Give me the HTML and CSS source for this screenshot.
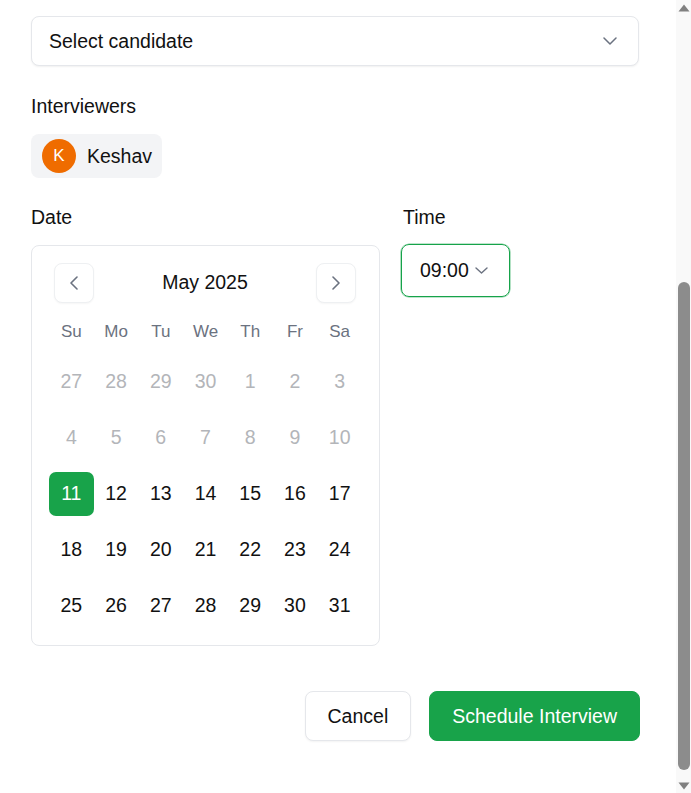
FILE: index.html
```html
<!DOCTYPE html>
<html lang="en">
<head>
<meta charset="utf-8">
<title>Schedule Interview</title>
<link rel="stylesheet" href="styles.css">
</head>
<body>
<div class="app">
  <div class="page">
    <div class="select"><span>Select candidate</span>
      <svg class="chev" width="14" height="8" viewBox="0 0 14 8"><path d="M1 1l6 6 6-6" fill="none" stroke="#6b7280" stroke-width="1.5" stroke-linecap="round" stroke-linejoin="round"/></svg>
    </div>

    <div class="field">
      <div class="label">Interviewers</div>
      <div class="chips">
        <div class="chip"><span class="avatar">K</span><span>Keshav</span></div>
      </div>
    </div>

    <div class="datetime">
      <div class="date-col">
        <div class="label">Date</div>
        <div class="calendar">
          <div class="cal-head">
            <button class="nav" type="button" aria-label="Previous month">
              <svg width="8" height="14" viewBox="0 0 8 14"><path d="M7 1L1 7l6 6" fill="none" stroke="#6b7280" stroke-width="1.6" stroke-linecap="round" stroke-linejoin="round"/></svg>
            </button>
            <div class="month">May 2025</div>
            <button class="nav" type="button" aria-label="Next month">
              <svg width="8" height="14" viewBox="0 0 8 14"><path d="M1 1l6 6-6 6" fill="none" stroke="#6b7280" stroke-width="1.6" stroke-linecap="round" stroke-linejoin="round"/></svg>
            </button>
          </div>
          <div class="weekdays">
            <span>Su</span><span>Mo</span><span>Tu</span><span>We</span><span>Th</span><span>Fr</span><span>Sa</span>
          </div>
          <div class="days">
            <span class="day muted">27</span><span class="day muted">28</span><span class="day muted">29</span><span class="day muted">30</span><span class="day muted">1</span><span class="day muted">2</span><span class="day muted">3</span>
            <span class="day muted">4</span><span class="day muted">5</span><span class="day muted">6</span><span class="day muted">7</span><span class="day muted">8</span><span class="day muted">9</span><span class="day muted">10</span>
            <span class="day selected">11</span><span class="day">12</span><span class="day">13</span><span class="day">14</span><span class="day">15</span><span class="day">16</span><span class="day">17</span>
            <span class="day">18</span><span class="day">19</span><span class="day">20</span><span class="day">21</span><span class="day">22</span><span class="day">23</span><span class="day">24</span>
            <span class="day">25</span><span class="day">26</span><span class="day">27</span><span class="day">28</span><span class="day">29</span><span class="day">30</span><span class="day">31</span>
          </div>
        </div>
      </div>
      <div class="time-col">
        <div class="label">Time</div>
        <div class="time-select"><span>09:00</span>
          <svg width="13" height="7" viewBox="0 0 13 7"><path d="M1 1l5.5 5 5.5-5" fill="none" stroke="#6b7280" stroke-width="1.4" stroke-linecap="round" stroke-linejoin="round"/></svg>
        </div>
      </div>
    </div>

    <div class="actions">
      <button class="btn btn-cancel" type="button">Cancel</button>
      <button class="btn btn-primary" type="button">Schedule Interview</button>
    </div>
  </div>

  <div class="scrollbar" aria-hidden="true">
    <div class="sb-btn"><svg width="12" height="8" viewBox="0 0 12 8"><path d="M6 0.5L11.5 7.5H0.5Z" fill="#808080"/></svg></div>
    <div class="sb-track"><div class="sb-thumb"></div></div>
    <div class="sb-btn"><svg width="12" height="8" viewBox="0 0 12 8"><path d="M0.5 0.5H11.5L6 7.5Z" fill="#808080"/></svg></div>
  </div>
</div>
</body>
</html>
```
FILE: styles.css
```css
* { box-sizing: border-box; }
html, body { margin: 0; padding: 0; background: #fff; }
body {
  font-family: "Liberation Sans", Arial, sans-serif;
  font-size: 19.5px;
  color: #111;
}
.app {
  display: flex;
  height: 793px;
  overflow: hidden;
}
.page {
  width: 676px;
  padding: 16px 36px 0 31px;
  display: flex;
  flex-direction: column;
}
.field { display: flex; flex-direction: column; margin-top: 28px; }
.label { line-height: 24px; height: 24px; margin-bottom: 16px; }
.select {
  height: 50px;
  width: 608px;
  border: 1px solid #e5e7eb;
  border-radius: 8px;
  box-shadow: 0 1px 2px rgba(0,0,0,0.06);
  display: flex;
  align-items: center;
  justify-content: space-between;
  padding: 0 21px 0 17px;
  background: #fff;
}
.chips { display: flex; }
.chip {
  display: flex;
  align-items: center;
  gap: 11px;
  height: 44px;
  padding: 0 10px 0 11px;
  background: #f3f4f6;
  border-radius: 8px;
}
.avatar {
  width: 34px;
  height: 34px;
  border-radius: 50%;
  background: #ef6c00;
  color: #fff;
  font-size: 17px;
  display: flex;
  align-items: center;
  justify-content: center;
}
.datetime { display: flex; align-items: flex-start; gap: 21px; margin-top: 27px; }
.date-col { display: flex; flex-direction: column; width: 349px; }
.calendar {
  border: 1px solid #e5e7eb;
  border-radius: 8px;
  padding: 17px 17px 16px;
  height: 401px;
}
.cal-head {
  height: 40px;
  padding: 0 6px 0 5px;
  display: flex;
  align-items: center;
  justify-content: space-between;
}
.nav {
  width: 40px;
  height: 40px;
  border: 1px solid #eef0f2;
  border-radius: 8px;
  background: #fff;
  box-shadow: 0 1px 2px rgba(0,0,0,0.04);
  display: flex;
  align-items: center;
  justify-content: center;
  padding: 0;
}
.month { font-size: 19.5px; margin-top: -2px; }
.weekdays {
  margin-top: 16px;
  height: 26px;
  display: grid;
  grid-template-columns: repeat(7, 1fr);
  align-items: center;
  text-align: center;
  font-size: 17px;
  color: #6b7280;
}
.days {
  margin-top: 15px;
  display: grid;
  grid-template-columns: repeat(7, 1fr);
  grid-auto-rows: 44px;
  row-gap: 12px;
}
.day {
  display: flex;
  align-items: center;
  justify-content: center;
  border-radius: 7px;
  padding-bottom: 2px;
}
.day.muted { color: #b3b5b9; }
.day.selected { background: #18a34a; color: #fff; }
.time-col { display: flex; flex-direction: column; }
.time-col .label { margin-bottom: 15px; padding-left: 2px; }
.time-select {
  width: 109px;
  height: 53px;
  border: 1px solid #16a34a;
  box-shadow: 0 0 0 0.6px rgba(22,163,74,0.55);
  border-radius: 8px;
  display: flex;
  align-items: center;
  gap: 6px;
  padding-left: 18px;
}
.actions {
  margin-top: 45px;
  display: flex;
  justify-content: flex-end;
  gap: 18px;
}
.btn {
  height: 50px;
  padding: 0 22px;
  border-radius: 8px;
  font-family: inherit;
  font-size: 19.5px;
  cursor: pointer;
}
.btn-cancel {
  background: #fff;
  color: #111;
  border: 1px solid #e5e7eb;
  box-shadow: 0 1px 2px rgba(0,0,0,0.05);
}
.btn-primary {
  background: #18a34a;
  color: #fff;
  border: 1px solid #18a34a;
}
.scrollbar {
  width: 15px;
  flex: none;
  background: #f9f9f9;
  display: flex;
  flex-direction: column;
}
.sb-btn {
  height: 15px;
  display: flex;
  align-items: center;
  justify-content: center;
}
.sb-track {
  flex: 1;
  display: flex;
  flex-direction: column;
  align-items: center;
}
.sb-thumb {
  margin-top: 267px;
  width: 12px;
  height: 488px;
  border-radius: 6px;
  background: #8c8c8c;
}
```
